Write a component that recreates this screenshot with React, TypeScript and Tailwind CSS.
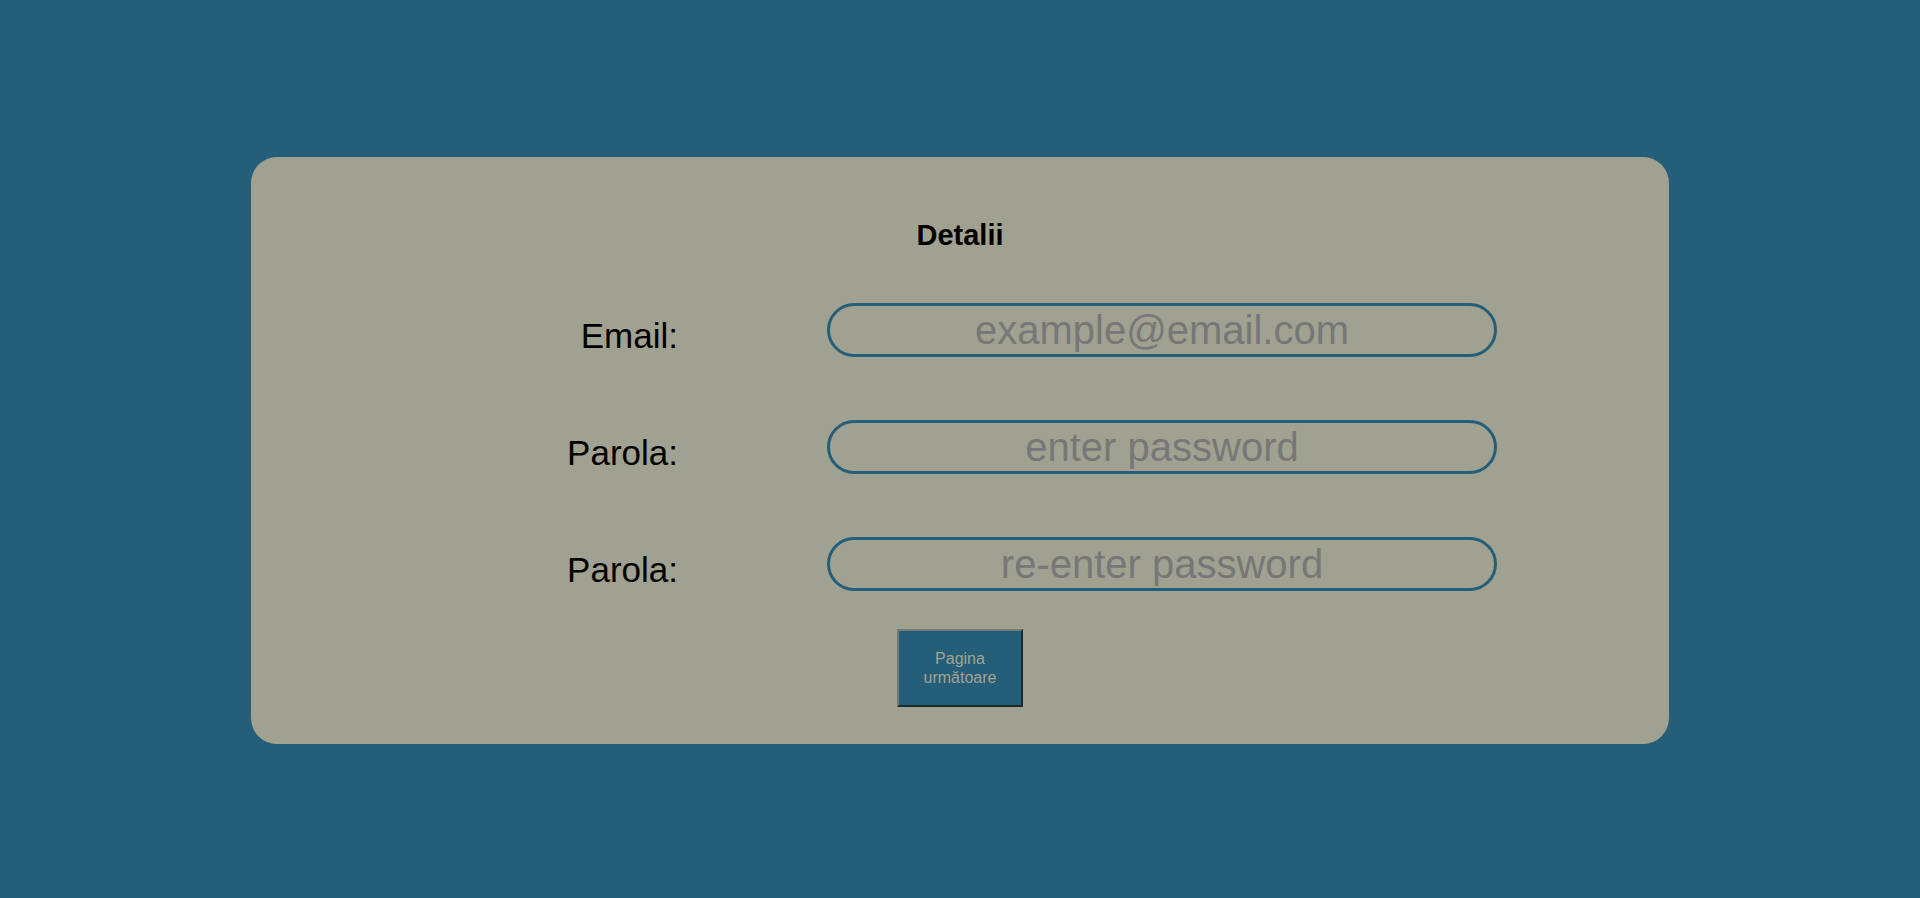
import React from "react";

const font = { fontFamily: '"Liberation Sans", Arial, sans-serif' };

function Row({ label, placeholder, type, first }: { label: string; placeholder: string; type: string; first?: boolean }) {
  return (
    <div className={`flex items-start ${first ? "mt-[51px]" : "mt-[63px]"}`}>
      <label className="w-[201px] text-right text-[35px] leading-[normal] text-black mt-[13px]">{label}</label>
      <input
        type={type}
        placeholder={placeholder}
        className="ml-[149px] w-[670px] h-[54px] rounded-full border-[3px] border-[#245e78] bg-transparent text-center text-[40px] leading-[normal] text-black placeholder:text-[#777777] outline-none"
        style={font}
      />
    </div>
  );
}

export default function App() {
  return (
    <div className="w-full h-[898px] bg-[#245e78] pt-[157px]" style={font}>
      <div className="mx-auto w-[1418px] h-[587px] rounded-[26px] bg-[#a0a190] flex flex-col">
        <h2 className="mt-[62px] text-center text-[29px] font-bold leading-[normal] text-black">Detalii</h2>
        <div className="ml-[226px] flex flex-col">
          <Row first label="Email:" placeholder="example@email.com" type="email" />
          <Row label="Parola:" placeholder="enter password" type="password" />
          <Row label="Parola:" placeholder="re-enter password" type="password" />
        </div>
        <div className="flex justify-center mt-[38px]">
          <button
            className="w-[126px] h-[78px] bg-[#245e78] text-[#a3a493] text-[16px] leading-[19px] text-center border-2 border-t-[#777b78] border-l-[#777b78] border-b-[#1c2a2c] border-r-[#1c2a2c] flex items-center justify-center"
            style={font}
          >
            Pagina<br />următoare
          </button>
        </div>
      </div>
    </div>
  );
}
